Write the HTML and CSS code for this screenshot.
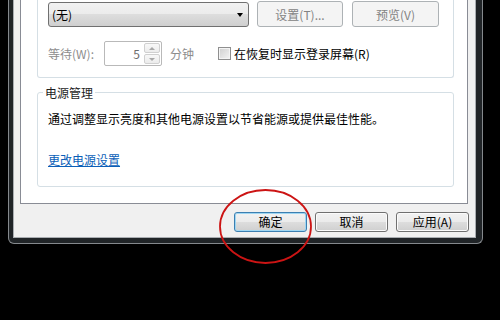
FILE: index.html
```html
<!DOCTYPE html>
<html lang="zh-CN">
<head>
<meta charset="utf-8">
<title>屏幕保护程序设置</title>
<link rel="stylesheet" href="styles.css">
</head>
<body>
<div class="window">
  <div class="client">
    <div class="panel">
      <div class="group group1">
        <div class="row row1">
          <div class="combo"><span class="combo-text">(无)</span><span class="combo-arrow"></span></div>
          <button class="btn-disabled btn-set">设置(T)...</button>
          <button class="btn-disabled btn-preview">预览(V)</button>
        </div>
        <div class="row row2">
          <span class="label-gray wait-label">等待(W):</span>
          <div class="spin">
            <span class="spin-value">5</span>
            <div class="spin-buttons">
              <span class="spin-btn"><span class="arrow-up"></span></span>
              <span class="spin-btn"><span class="arrow-down"></span></span>
            </div>
          </div>
          <span class="label-gray minutes">分钟</span>
          <span class="checkbox"></span>
          <span class="check-label">在恢复时显示登录屏幕(R)</span>
        </div>
      </div>
      <div class="group group2">
        <span class="legend">电源管理</span>
        <p class="desc">通过调整显示亮度和其他电源设置以节省能源或提供最佳性能。</p>
        <a class="link" href="#">更改电源设置</a>
      </div>
    </div>
    <div class="actions">
      <button class="btn btn-default">确定</button>
      <button class="btn">取消</button>
      <button class="btn">应用(A)</button>
    </div>
  </div>
</div>
<svg class="mark" width="96" height="78" viewBox="0 0 96 78">
  <ellipse cx="46.5" cy="38.5" rx="45.5" ry="36.5" fill="none" stroke="#cc1414" stroke-width="1.8"/>
</svg>
</body>
</html>
```
FILE: styles.css
```css
* { box-sizing: border-box; }

html, body {
  margin: 0;
  padding: 0;
}

body {
  width: 500px;
  height: 320px;
  overflow: hidden;
  background: #000;
  position: relative;
  font-family: "Noto Sans CJK SC", "Noto Sans", sans-serif;
  font-size: 12px;
  line-height: 16px;
  color: #1a1a1a;
}

.window {
  margin-left: 8px;
  width: 475px;
  background: #202427;
  border: 1px solid #85898d;
  border-top: none;
  border-radius: 0 0 6px 6px;
  padding: 0 6px 5px 4px;
}

.client {
  border: 1px solid #a9adb1;
  border-top: none;
  background: #f0f0f0;
  padding: 0 6px 5px 6px;
}

.panel {
  width: 448px;
  background: #fff;
  border: 1px solid #898c95;
  border-top: none;
  padding: 0 13px 16px 16px;
}

.group {
  border: 1px solid #d5dfe5;
  border-radius: 3px;
}

.group1 {
  border-top: none;
  border-radius: 0 0 3px 3px;
  padding: 0 10px 11px 10px;
}

.row {
  display: flex;
  align-items: center;
}

.row1 {
  height: 27px;
  align-items: flex-end;
}

.combo {
  width: 201px;
  height: 25px;
  border: 1px solid #707070;
  border-radius: 3px;
  background: linear-gradient(#f2f2f2 0%, #ebebeb 50%, #dddddd 50%, #cfcfcf 100%);
  display: flex;
  align-items: center;
  justify-content: space-between;
  padding: 0 5px 0 3px;
}

.combo-text {
  color: #000;
}

.combo-arrow {
  width: 0;
  height: 0;
  border-left: 3.5px solid transparent;
  border-right: 3.5px solid transparent;
  border-top: 4px solid #000;
}

.btn-disabled {
  height: 26px;
  border: 1px solid #adb2b5;
  border-radius: 3px;
  background: #f4f4f4;
  color: #838383;
  font-family: inherit;
  font-size: 12px;
  padding: 0;
}

.btn-set {
  width: 86px;
  margin-left: 8px;
}

.btn-preview {
  width: 87px;
  margin-left: 9px;
}

.row2 {
  margin-top: 14px;
  height: 25px;
}

.label-gray {
  color: #8d8d8d;
}

.wait-label {
  width: 56px;
}

.spin {
  width: 58px;
  height: 25px;
  border: 1px solid #b9b9b9;
  border-radius: 2px;
  background: #fff;
  display: flex;
  align-items: center;
  justify-content: flex-end;
  padding: 1px;
}

.spin-value {
  color: #6d6d6d;
  margin-right: 4px;
}

.spin-buttons {
  width: 16px;
  height: 21px;
  display: flex;
  flex-direction: column;
  justify-content: space-between;
}

.spin-btn {
  height: 10px;
  border: 1px solid #d0d0d0;
  border-radius: 2px;
  background: linear-gradient(#f8f8f8, #ececec);
  display: flex;
  align-items: center;
  justify-content: center;
}

.arrow-up {
  width: 0;
  height: 0;
  border-left: 3px solid transparent;
  border-right: 3px solid transparent;
  border-bottom: 3px solid #a8a8a8;
}

.arrow-down {
  width: 0;
  height: 0;
  border-left: 3px solid transparent;
  border-right: 3px solid transparent;
  border-top: 3px solid #a8a8a8;
}

.minutes {
  margin-left: 8px;
}

.checkbox {
  width: 13px;
  height: 13px;
  margin-left: 24px;
  border: 1px solid #8f8f8f;
  background: linear-gradient(135deg, #cfcfcf, #f4f4f4);
  box-shadow: inset 0 0 0 1px #f4f4f4;
}

.check-label {
  margin-left: 3px;
  color: #000;
}

.group2 {
  margin-top: 14px;
  padding: 0 10px 18px 10px;
}

.legend {
  display: block;
  width: fit-content;
  margin: -8px 0 0 -5px;
  padding: 0 2px;
  background: #fff;
  color: #1e1e1e;
}

.desc {
  margin: 10px 0 0 0;
  color: #000;
}

.link {
  display: block;
  width: fit-content;
  margin-top: 25px;
  color: #0b5fb8;
  text-decoration: underline;
}

.actions {
  display: flex;
  justify-content: flex-end;
  gap: 8px;
  margin-top: 8px;
}

.btn {
  width: 73px;
  height: 20px;
  border: 1px solid #707070;
  border-radius: 3px;
  background: linear-gradient(#f2f2f2 0%, #ebebeb 48%, #dddddd 52%, #cfcfcf 100%);
  color: #000;
  font-family: inherit;
  font-size: 12px;
  line-height: 16px;
  padding: 0;
  box-shadow: inset 0 0 0 1px #fbfbfb;
}

.btn-default {
  border-color: #3c7fb1;
  box-shadow: inset 0 0 0 1px #9fd6f2;
}

.mark {
  position: absolute;
  left: 219px;
  top: 188px;
}
```
